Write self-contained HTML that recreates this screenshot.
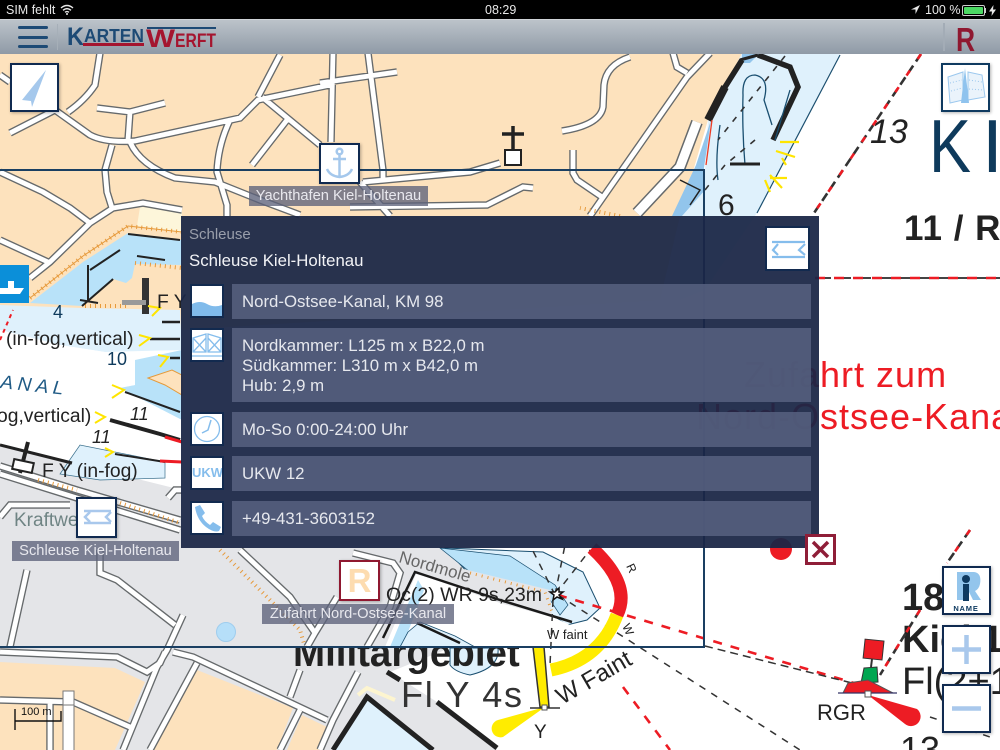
<!DOCTYPE html>
<html lang="de"><head><meta charset="utf-8"><title>Kartenwerft</title>
<style>
html,body{margin:0;padding:0;width:1000px;height:750px;overflow:hidden;background:#fff;font-family:"Liberation Sans",sans-serif}
#map{position:absolute;left:0;top:0}
.status{position:absolute;left:0;top:0;width:1000px;height:19px;background:#000;color:#e8e8e8;font-size:12.500px;line-height:20px}
.status span{position:absolute;top:0}
.nav{position:absolute;left:0;top:19px;width:1000px;height:35px;background:linear-gradient(#bcc3ca,#8f9aa6);border-top:1px solid #d0d4d8;box-sizing:border-box}
.bar{position:absolute;left:18px;width:30px;height:3px;border-radius:2px;background:#1d4a75}
.panel{position:absolute;left:181px;top:216px;width:638px;height:332px;background:rgba(27,38,70,.94)}
.t1{position:absolute;left:8px;top:10px;font-size:15px;color:#9a9fab}
.t2{position:absolute;left:8px;top:35px;font-size:16.800px;color:#f2f3f6}
.row{position:absolute;left:51px;width:579px;background:rgba(84,94,125,.9);color:#e6e8ee;font-size:16.800px;line-height:20px;padding-left:10px;box-sizing:border-box}
.ic{position:absolute;left:9px;width:34px;height:34px;background:#fff;border:2px solid #122a4f;box-sizing:border-box;overflow:hidden}
.ic svg,.btn svg{display:block;position:absolute;left:0;top:0}
.btn{position:absolute;background:#fff;border:2px solid #102a50;box-sizing:border-box;box-shadow:1px 1px 3px rgba(0,0,0,.3)}
.lab{position:absolute;background:rgba(92,97,122,.78);color:#e8e8ee;font-size:14.700px;text-align:center;height:20px;line-height:20px;white-space:nowrap}
</style></head><body>
<svg id="map" width="1000" height="750" viewBox="0 0 1000 750" font-family="Liberation Sans, sans-serif">
<defs>
<path id="roads" fill="none" d="M100 53L95 85Q85 100 68 112M10 133L55 110L90 135Q105 143 135 141L240 118L258 100L330 85M258 97L280 55M262 97L320 145M287 120L252 165M97 108L130 112L165 103M130 112L128 140M112 145L105 170L107 192L112 208M130 142Q140 165 175 178L215 182L260 200L300 215M230 120Q218 145 217 172L227 205L227 216M0 172L43 192L70 208L90 223M30 278L50 262L90 223L113 208L143 203L182 210M0 240L48 262M0 75L10 82M333 53L331 142M320 83L397 72M368 53L383 170V182M630 57Q606 65 604 85L603 107Q600 125 562 131M710 53L687 77L620 173L590 216M673 53L677 67L687 73M573 150V173L577 180L602 197M500 163L470 172L363 182M350 207L487 205L523 187L533 188M360 182L390 216M27 570L10 647M100 550V573L117 580L175 625M183 615L167 650L157 667L123 750M0 652L117 657L147 672L160 663L165 652M173 652L193 657L327 720M197 663L150 750M300 670L290 697M300 710L280 750M358 672L333 720L320 750M0 700L73 702L130 727M50 703V750M240 550L290 597L315 633L307 647M353 553L393 563L400 573L390 607L367 647M337 597L315 633M0 466L77 490L180 520M0 474L77 498L180 530M0 517L10 505H70M168 498L175 490H182"/>
</defs>
<rect width="1000" height="750" fill="#fff"/>
<!-- peach land -->
<polygon points="0,53 745,53 708,120 680,216 660,300 182,330 120,310 0,320" fill="#fde2bd"/>
<!-- right water -->
<polygon points="742,53 840,53 757,213 705,290 680,300 680,216 705,170 708,120" fill="#dff1fc"/>
<polygon points="711,120 704,168 705,190 682,216 672,216 696,165" fill="#92c5ec"/>
<polygon points="742,53 760,53 750,63 742,63" fill="#92c5ec"/>
<!-- park -->
<polygon points="140,207 182,210 182,232 137,226" fill="#fdf6da"/>
<!-- left water -->
<polygon points="30,303 83,262 128,233 182,240 182,265 135,264 132,278 126,283 113,279 82,306" fill="#b8e2f9"/>
<polygon points="0,305 82,308 180,310 182,350 105,352 60,345 0,330" fill="#dff1fc"/>
<polygon points="135,360 182,350 182,420 120,388 135,385" fill="#b8e2f9"/>
<!-- white canal + grey -->
<polygon points="0,330 60,345 105,352 130,360 135,385 112,388 182,420 182,500 0,445" fill="#fff"/>
<polygon points="0,445 73,463 182,490 182,548 470,548 545,590 560,625 400,647 0,647" fill="#e4e5e8"/>
<polygon points="60,474 80,445 165,462 165,478 100,480" fill="#dff1fc" stroke="#3a6f8c" stroke-width=".7"/>
<polygon points="148,378 172,370 182,375 182,395 165,385" fill="#fde2bd" stroke="#e59a3a"/>
<!-- mole area -->
<polygon points="445,548 543,552 583,572 600,608 587,620 567,625 530,600 470,575" fill="#dff1fc" stroke="#1a4f70" stroke-width="1"/>
<polygon points="440,548 510,556 555,585 568,605 560,615 545,592 470,572" fill="#b8e2f9" stroke="#1a4f70" stroke-width=".7"/>
<polygon points="416,571 447,565 550,590 552,617 500,600" fill="#e4e5e8"/>
<polygon points="385,647 416,574 430,578 500,603 555,618 570,625 470,647" fill="#fff"/>
<polygon points="390,647 418,580 424,590 408,632 470,647" fill="#b8e2f9"/>
<polygon points="408,632 420,622 455,636 475,647 400,647" fill="#dff1fc" stroke="#1a4f70" stroke-width=".8"/>
<path d="M383 638L415 572L500 600M500 600L572 622M417 623L460 643" stroke="#1a1a1a" stroke-width="2.500" fill="none"/>
<path d="M470 573L545 592L552 612" stroke="#e69a3c" stroke-width="3" stroke-dasharray="1 5" fill="none"/>
<!-- bottom -->
<polygon points="0,647 704,647 704,750 0,750" fill="#e4e5e8"/>
<polygon points="450,648 704,648 704,750 497,750 437,702 390,672" fill="#fff"/>
<path d="M450 648H498Q500 668 470 675Q455 672 450 665Z" fill="#dff1fc" stroke="#1a4f70"/>
<polygon points="0,662 115,668 145,682 115,750 0,750" fill="#fde2bd"/>
<polygon points="197,670 293,708 277,750 153,750" fill="#fde2bd"/>
<polygon points="302,715 327,727 320,750 287,750" fill="#fde2bd"/>
<polygon points="333,750 367,697 433,750" fill="#dff1fc"/>
<path d="M358 695L367 688L395 700" stroke="#fdf5d0" stroke-width="4" fill="none"/>
<!-- roads -->
<use href="#roads" stroke="#666a6c" stroke-width="7.500"/>
<use href="#roads" stroke="#fff" stroke-width="4.800"/>
<path d="M697 122L680 167L637 213" stroke="#666a6c" stroke-width="12" fill="none"/>
<path d="M697 122L680 167L637 213" stroke="#fff" stroke-width="9" fill="none"/>
<rect x="63" y="691" width="11" height="60" fill="#fff" stroke="#777"/>
<line x1="63" y1="705" x2="74" y2="705" stroke="#777"/>
<!-- orange ticks -->
<path d="M220 550L300 630L305 647M38 480L77 490M120 503L180 523M30 298L83 256L128 226L182 232M135 263L182 268M85 306H130M620 216L580 208" stroke="#e69a3c" stroke-width="4" stroke-dasharray="1 4" fill="none"/>
<path d="M30 298L83 256L128 226L182 232" stroke="#e69a3c" stroke-width="1" fill="none"/>
<!-- left chart marks -->
<path d="M82 306L112 280L113 279M88 265V300M80 300L98 303M128 234L180 240M137 256L165 260M90 270L120 250" stroke="#222" stroke-width="2" fill="none"/>
<rect x="142" y="278" width="7" height="36" fill="#333"/><rect x="122" y="300" width="24" height="5" fill="#999"/>
<path d="M162 322H180M150 339H180M170 358H180" stroke="#222" stroke-width="2.500"/>
<path d="M148 306l12 2-8 8M139 335l11 3-11 8M158 355l10 2-8 10M112 385l12 5-12 8M95 412l10 5-10 6M105 448l8 4-8 5" stroke="#ffe500" stroke-width="2" fill="none"/>
<path d="M125 392L180 412" stroke="#222" stroke-width="2"/>
<path d="M110 420L160 434L180 440" stroke="#222" stroke-width="4"/>
<path d="M115 454L165 462" stroke="#222" stroke-width="2"/><path d="M160 461L182 462" stroke="#ed1c24" stroke-width="3"/>
<path d="M165 437L182 442" stroke="#ed1c24" stroke-width="3"/>
<path d="M0 445L72 463" stroke="#222" stroke-width="3"/>
<path d="M28 442L20 473" stroke="#222" stroke-width="4"/>
<rect x="13" y="461" width="20" height="10" fill="#fff" stroke="#222" stroke-width="2" transform="rotate(12 23 466)"/>
<path d="M0 340L13 310" stroke="#ed1c24" stroke-width="2" stroke-dasharray="4 4"/>
<rect x="0" y="265" width="29" height="38" fill="#0b8fd9"/>
<path d="M0 288H24L20 294H0ZM8 281H14V288H8Z" fill="#fff"/>
<g fill="#222">
<text x="6" y="345" font-size="19.300">(in-fog,vertical)</text>
<text x="-3" y="422" font-size="19.300">og,vertical)</text>
<text x="42" y="477" font-size="19.300">F Y (in-fog)</text>
<text x="157" y="308" font-size="19.300">F Y</text>
<text x="130" y="420" font-size="18" font-style="italic">11</text>
<text x="92" y="443" font-size="18" font-style="italic">11</text>
</g>
<text x="107" y="365" font-size="18" fill="#0e3a5c">10</text>
<text x="53" y="318" font-size="18" fill="#0e3a5c">4</text>
<text x="0" y="388" font-size="19" font-style="italic" letter-spacing="4.500" fill="#1f5a85" transform="rotate(6 0 388)">ANAL</text>
<text x="14" y="526" font-size="19" fill="#6f8484">Kraftwe</text>
<text x="398" y="562" font-size="17" fill="#666" transform="rotate(16 398 562)">Nordmole</text>
<!-- top chart marks -->
<path d="M513 126V150M502 134H524" stroke="#222" stroke-width="3.500"/>
<rect x="505" y="150" width="16" height="15" fill="#fff" stroke="#222" stroke-width="2"/>
<path d="M708 120L725 87L742 60M758 55L790 67L798 87L773 140" stroke="#222" stroke-width="5.500" fill="none"/>
<path d="M708 120L725 87" stroke="#222" stroke-width="8"/>
<path d="M740 60L758 55" stroke="#222" stroke-width="3"/>
<path d="M720 125Q715 160 718 180M745 165Q742 130 743 95Q742 75 755 75Q770 78 764 100L772 125M790 90L775 140" stroke="#1a4f70" stroke-width="1.300" fill="none"/>
<path d="M840 55L757 213" stroke="#1a4f70" stroke-width="1.200" fill="none"/>
<path d="M785 56L718 140M755 140L725 165M725 165L705 190" stroke="#333" stroke-width="1.600" stroke-dasharray="6 7" fill="none"/>
<path d="M730 164H760" stroke="#222" stroke-width="3"/>
<path d="M712 120L706 165" stroke="#ed3b24" stroke-width="1.300"/>
<path d="M780 142H799M776 151L795 157M782 158L786 165M770 178H787M770 175L782 188M765 180L770 192" stroke="#ffe500" stroke-width="2.200"/>
<path d="M680 180L700 190L690 205" stroke="#222" stroke-width="1.500" fill="none"/>
<text x="718" y="215" font-size="30" fill="#222">6</text>
<!-- right text -->
<text x="870" y="143" font-size="34" font-style="italic" fill="#222">13</text>
<text x="929" y="172" font-size="75" fill="#0e3a5c" textLength="42" lengthAdjust="spacingAndGlyphs">K</text>
<text x="982" y="172" font-size="75" fill="#0e3a5c">I</text>
<text x="904" y="240" font-size="35" font-weight="bold" fill="#222" letter-spacing="1">11 / R</text>
<text x="744" y="387" font-size="36" letter-spacing="1" fill="#ed1c24">Zufahrt zum</text>
<text x="696" y="429" font-size="36" letter-spacing="1" fill="#ed1c24">Nord-Ostsee-Kanal</text>
<text x="902" y="610" font-size="38" font-weight="bold" fill="#222">18</text>
<text x="902" y="652" font-size="38" font-weight="bold" fill="#222">Kiel 1</text>
<text x="902" y="694" font-size="38" fill="#222">Fl(2+1)</text>
<text x="900" y="762" font-size="36" fill="#222">13</text>
<!-- dashed lines -->
<g fill="none" stroke-width="2.600">
<path d="M921 54L812 216M970 530L947 563M920 610L880 675" stroke="#333" stroke-dasharray="9 5"/>
<path d="M921 54L812 216M970 530L947 563M920 610L880 675" stroke="#ed1c24" stroke-dasharray="6 14"/>
<path d="M558 595L864 686M623 687L670 750" stroke="#ed1c24" stroke-dasharray="9 9"/>
<path d="M705 646L864 686" stroke="#333" stroke-width="1.500" stroke-dasharray="8 5"/>
<path d="M815 278H1000" stroke="#444" stroke-dasharray="16 4" stroke-width="2"/>
<path d="M815 278H1000" stroke="#ed1c24" stroke-dasharray="10 9"/>
<path d="M558 595L800 750M930 717L990 737M555 595L530 545M555 595L565 545M555 595L590 550M553 600L550 665" stroke="#333" stroke-width="1.500" stroke-dasharray="7 7"/>
</g>
<!-- sector arcs -->
<path d="M592 548Q632 585 617 615" stroke="#ed1c24" stroke-width="13" fill="none"/>
<path d="M617 615Q600 660 551 670" stroke="#ffec00" stroke-width="13" fill="none"/>
<polygon points="533,647 544,647 549,707 540,707" fill="#ffec00" stroke="#333" stroke-width="1.500"/>
<path d="M545 707L498 720A8.500 8.500 0 0 0 503 737Z" fill="#ffec00"/>
<path d="M530 708H560" stroke="#333" stroke-width="1.500"/>
<rect x="542" y="705" width="5" height="5" fill="#fff" stroke="#555"/>
<text x="534" y="738" font-size="19" fill="#222">Y</text>
<text x="0" y="0" font-size="24" fill="#222" transform="translate(562 705) rotate(-30)">W Faint</text>
<text x="547" y="639" font-size="13" fill="#222">W faint</text>
<text x="386" y="601" font-size="19.500" fill="#222">Oc(2) WR 9s,23m</text>
<text x="0" y="0" font-size="12" fill="#222" transform="translate(626 566) rotate(65)">R</text>
<text x="0" y="0" font-size="12" fill="#222" transform="translate(622 626) rotate(65)">W</text>
<path d="M555 592l4-4 0 4 4 0-4 3 3 4-5-2-4 3 1-5-4-3z" fill="#fff" stroke="#111" stroke-width="1.500"/>
<!-- buoy -->
<rect x="864" y="640" width="19" height="19" fill="#ed1c24" stroke="#333" transform="rotate(6 873 650)"/>
<path d="M872 659L871 667" stroke="#333" stroke-width="2"/>
<polygon points="864,668 877,667 878,682 861,683" fill="#00a651" stroke="#333"/>
<polygon points="843,693 848,683 868,680 893,693" fill="#ed1c24" stroke="#555"/>
<path d="M838 693H897" stroke="#336" stroke-width="1.200"/>
<path d="M868 695L917 709A9 9 0 0 1 905 724Z" fill="#ed1c24"/>
<rect x="865" y="691" width="6" height="6" fill="#fff" stroke="#555"/>
<text x="817" y="720" font-size="22" fill="#222">RGR</text>
<!-- frame-covered labels -->
<svg x="0" y="648" width="1000" height="102">
<text x="293" y="18" font-size="38.500" font-weight="bold" fill="#222">Militärgebiet</text>
<text x="401" y="59" font-size="36" fill="#333" textLength="121">Fl Y 4s</text>
</svg>
<path d="M333 750L367 697L433 750M437 702L497 748M387 672L400 680" stroke="#222" stroke-width="5" fill="none"/>
<circle cx="226" cy="632" r="9.500" fill="#b6dff9" stroke="#9fcdee"/>
<circle cx="781" cy="549" r="11" fill="#ed1c24"/>
<!-- frame -->
<path d="M0 170H704V647H0" fill="none" stroke="#1a3f62" stroke-width="2"/>
<!-- scale -->
<path d="M15 709V730M15 721H61V711" stroke="#111" stroke-width="1.400" fill="none"/>
<text x="21" y="715" font-size="11" fill="#111">100 m</text>
</svg>

<div class="status">
<span style="left:6px">SIM fehlt</span>
<svg style="position:absolute;left:60px;top:4px" width="14" height="11" viewBox="0 0 14 11"><path d="M1 4Q7-1 13 4M3 6.300Q7 3 11 6.300M5 8.300Q7 6.800 9 8.300" stroke="#e8e8e8" stroke-width="1.400" fill="none"/><circle cx="7" cy="10" r="1" fill="#e8e8e8"/></svg>
<span style="left:485px">08:29</span>
<svg style="position:absolute;left:910px;top:4px" width="11" height="11" viewBox="0 0 11 11"><path d="M10 1L1 5.500H5.500V10Z" fill="#e8e8e8"/></svg>
<span style="left:925px">100 %</span>
<div style="position:absolute;left:962px;top:5px;width:21px;height:9px;border:1px solid #ccc;border-radius:2px;box-sizing:content-box"><div style="margin:1px;height:7px;background:#4cd964;border-radius:1px"></div></div>
<div style="position:absolute;left:985px;top:8px;width:1px;height:5px;background:#ccc"></div>
<svg style="position:absolute;left:989px;top:5px" width="7" height="11" viewBox="0 0 7 11"><path d="M4.500 0L0 6.500H3L2.500 11L7 4.500H4Z" fill="#e8e8e8"/></svg>
</div>

<div class="nav">
<div class="bar" style="top:6px"></div><div class="bar" style="top:16px"></div><div class="bar" style="top:25px"></div>
<div style="position:absolute;left:57px;top:4px;width:1px;height:26px;background:#a6afb8"></div>
<svg style="position:absolute;left:66px;top:4px" width="152" height="26" viewBox="0 0 152 26" font-family="Liberation Sans, sans-serif" font-weight="bold">
<text x="1" y="21" font-size="25" fill="#1d4a75" textLength="17" lengthAdjust="spacingAndGlyphs">K</text>
<text x="18" y="18" font-size="18" fill="#1d4a75" textLength="60" lengthAdjust="spacingAndGlyphs">ARTEN</text>
<rect x="17" y="19" width="61" height="3" fill="#a5152f"/>
<text x="80" y="23" font-size="25" fill="#a5152f" textLength="29" lengthAdjust="spacingAndGlyphs">W</text>
<text x="109" y="23" font-size="19" fill="#a5152f" textLength="41" lengthAdjust="spacingAndGlyphs">ERFT</text>
<rect x="81" y="3" width="69" height="2" fill="#1d4a75"/>
</svg>
<div style="position:absolute;left:943px;top:3px;width:2px;height:28px;background:#a3acb6"></div>
<div style="position:absolute;left:956px;top:3px;font-size:33px;font-weight:bold;color:#8f1830;line-height:34px;transform:scaleX(.8);transform-origin:left">R</div>
</div>

<!-- map buttons -->
<div class="btn" style="left:10px;top:63px;width:49px;height:49px"><svg width="45" height="45" viewBox="0 0 45 45"><path d="M34 5L10 35L19 36L20 42Z" fill="#a5c8ec"/></svg></div>
<div class="btn" style="left:941px;top:63px;width:49px;height:49px;border-color:#0f3a60"><svg width="45" height="45" viewBox="0 0 45 45"><path d="M5 12L20 7V35L7 38ZM25 7L39 10L42 32L25 35Z" fill="#eaf3fb" stroke="#9cc8ee" stroke-width="1"/><path d="M22 3L26 38H18Z" fill="#8fc3ee"/><path d="M7 18L19 15M8 26L19 23M26 15L39 17M26 24L40 25" stroke="#9cc8ee" stroke-dasharray="1 2"/></svg></div>
<div class="btn" style="left:319px;top:143px;width:41px;height:41px"><svg width="37" height="37" viewBox="0 0 37 37"><g stroke="#a5c8ec" stroke-width="2.500" fill="none"><circle cx="18.500" cy="6.500" r="2.800"/><path d="M18.500 9.500V31M12 14H25M6 24Q9 31 18.500 32Q28 31 31 24"/></g></svg></div>
<div class="btn" style="left:76px;top:497px;width:41px;height:41px"><svg width="37" height="37" viewBox="0 0 37 37"><path d="M6 12H33M6 24H33M12 13L7 18L12 23M33 13L28 18L33 23" stroke="#a9c8ec" stroke-width="2.500" fill="none"/></svg></div>
<div class="btn" style="left:339px;top:560px;width:41px;height:41px;border-color:#8f1830"><div style="font-size:33px;font-weight:bold;color:#fddcb0;text-align:center;line-height:37px">R</div></div>
<div class="btn" style="left:942px;top:566px;width:49px;height:49px"><svg width="45" height="45" viewBox="0 0 45 45" font-family="Liberation Sans, sans-serif"><path d="M13 4H30Q38 5 36 16Q35 21 31 23L37 32H29L25 24H22V32H13Z" fill="#93c5ec"/><circle cx="22" cy="11" r="4" fill="#0f3a60"/><rect x="19" y="16" width="6" height="17" fill="#0f3a60"/><text x="22" y="43" font-size="7.500" font-weight="bold" fill="#0f3a60" text-anchor="middle" letter-spacing=".8">NAME</text></svg></div>
<div class="btn" style="left:942px;top:625px;width:49px;height:49px"><svg width="45" height="45" viewBox="0 0 45 45"><path d="M22.500 8V37M8 22.500H37" stroke="#a9c8ec" stroke-width="4.500"/></svg></div>
<div class="btn" style="left:942px;top:684px;width:49px;height:49px"><svg width="45" height="45" viewBox="0 0 45 45"><path d="M8 22.500H37" stroke="#a9c8ec" stroke-width="4.500"/></svg></div>

<div class="lab" style="left:249px;top:186px;width:179px">Yachthafen Kiel-Holtenau</div>
<div class="lab" style="left:12px;top:541px;width:167px">Schleuse Kiel-Holtenau</div>
<div class="lab" style="left:262px;top:604px;width:192px">Zufahrt Nord-Ostsee-Kanal</div>

<div class="panel">
<div class="t1">Schleuse</div>
<div class="t2">Schleuse Kiel-Holtenau</div>
<div style="position:absolute;left:584px;top:10px;width:45px;height:45px;background:#fff;border:2px solid #122a4f;box-sizing:border-box"><svg width="41" height="41" viewBox="0 0 41 41" style="display:block"><path d="M5 14H38M5 29H38M11 16L6 22L11 27M38 16L32 22L38 27" stroke="#85bdec" stroke-width="2.200" fill="none"/></svg></div>
<div class="ic" style="top:68px"><svg width="30" height="30" viewBox="0 0 30 30"><path d="M0 18Q8 14 15 18T30 19V30H0Z" fill="#80bbeb"/></svg></div>
<div class="row" style="top:68px;height:35px;line-height:35px">Nord-Ostsee-Kanal, KM 98</div>
<div class="ic" style="top:112px"><svg width="30" height="30" viewBox="0 0 30 30"><path d="M1 8L14 4V22H1ZM16 4L29 8V22H16ZM1 8L14 22M14 8L1 22M16 22L29 8M16 8L29 22M0 26H30" stroke="#85bdec" stroke-width="1.300" fill="none"/></svg></div>
<div class="row" style="top:112px;height:74px;padding-top:8px">Nordkammer: L125 m x B22,0 m<br>Südkammer: L310 m x B42,0 m<br>Hub: 2,9 m</div>
<div class="ic" style="top:196px"><svg width="30" height="30" viewBox="0 0 30 30"><circle cx="15" cy="15" r="12.500" fill="none" stroke="#85bdec" stroke-width="1.300"/><path d="M19 6L16 16L10 19" stroke="#85bdec" stroke-width="1.500" fill="none"/></svg></div>
<div class="row" style="top:196px;height:35px;line-height:35px">Mo-So 0:00-24:00 Uhr</div>
<div class="ic" style="top:240px"><div style="font-size:13px;font-weight:bold;color:#85bdec;text-align:center;line-height:30px">UKW</div></div>
<div class="row" style="top:240px;height:35px;line-height:35px">UKW 12</div>
<div class="ic" style="top:285px"><svg width="30" height="30" viewBox="0 0 30 30"><path d="M3 4L8 2L13 10L10 13Q12 18 18 22L21 19L29 24L27 28Q22 30 14 24Q5 17 3 4Z" fill="#85bdec"/></svg></div>
<div class="row" style="top:285px;height:35px;line-height:35px">+49-431-3603152</div>
</div>

<div class="btn" style="left:805px;top:534px;width:31px;height:31px;border:3px solid #8f1e38;box-shadow:none"><svg width="25" height="25" viewBox="0 0 25 25"><path d="M5 5L20 20M20 5L5 20" stroke="#8f1e38" stroke-width="3.500"/></svg></div>
</body></html>
